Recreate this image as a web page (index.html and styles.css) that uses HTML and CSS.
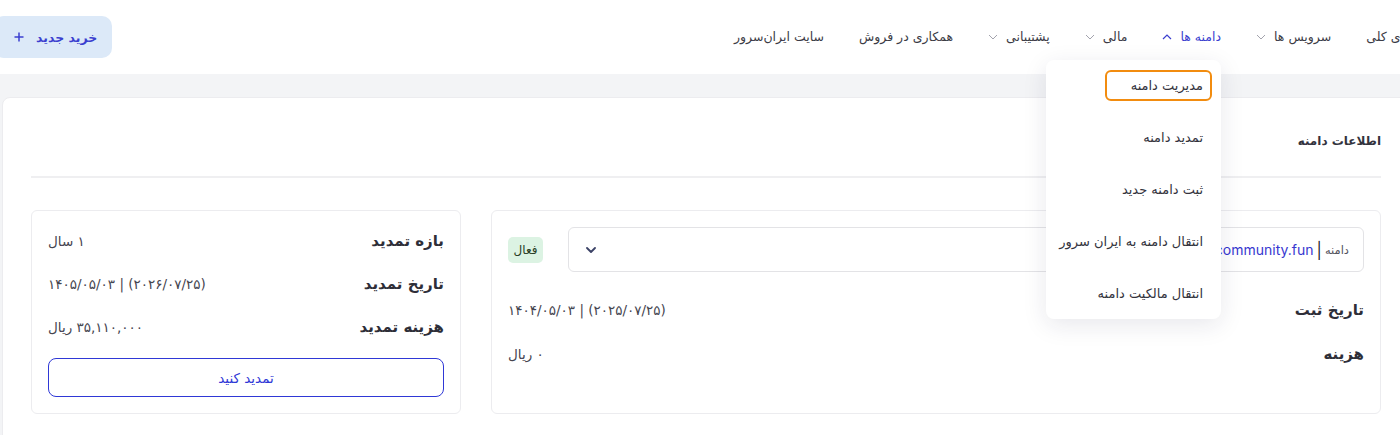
FILE: index.html
```html
<!DOCTYPE html>
<html lang="fa">
<head>
<meta charset="utf-8">
<title>اطلاعات دامنه</title>
<link rel="stylesheet" href="styles.css">
</head>
<body>
<div class="app" dir="rtl">
  <header class="topbar">
    <nav class="nav">
      <a class="nav-item">نمای کلی</a>
      <a class="nav-item"><span>سرویس ها</span><svg class="chev" viewBox="0 0 10 6"><path d="M1 1l4 4 4-4" fill="none" stroke="#a3a3ad" stroke-width="1"/></svg></a>
      <div class="nav-item active"><span>دامنه ها</span><svg class="chev" viewBox="0 0 10 6"><path d="M1 5l4-4 4 4" fill="none" stroke="#3b3fcf" stroke-width="1.2"/></svg>
        <div class="dropdown">
          <a class="dd-item focus">مدیریت دامنه</a>
          <a class="dd-item">تمدید دامنه</a>
          <a class="dd-item">ثبت دامنه جدید</a>
          <a class="dd-item">انتقال دامنه به ایران سرور</a>
          <a class="dd-item">انتقال مالکیت دامنه</a>
        </div>
      </div>
      <a class="nav-item"><span>مالی</span><svg class="chev" viewBox="0 0 10 6"><path d="M1 1l4 4 4-4" fill="none" stroke="#a3a3ad" stroke-width="1"/></svg></a>
      <a class="nav-item"><span>پشتیبانی</span><svg class="chev" viewBox="0 0 10 6"><path d="M1 1l4 4 4-4" fill="none" stroke="#a3a3ad" stroke-width="1"/></svg></a>
      <a class="nav-item">همکاری در فروش</a>
      <a class="nav-item">سایت ایران‌سرور</a>
    </nav>
    <button class="buy-btn"><span>خرید جدید</span><svg class="plus" viewBox="0 0 10 10"><path d="M5 0.5v9M0.5 5h9" fill="none" stroke="#3b3fcf" stroke-width="1.5"/></svg></button>
  </header>

  <main class="content">
    <section class="card">
      <h2 class="card-title">اطلاعات دامنه</h2>
      <div class="divider"></div>
      <div class="grid">
        <div class="box domain-box">
          <div class="domain-top">
            <div class="select">
              <div class="domain-name"><span class="domain-label">دامنه</span><span class="sep">|</span><span class="domain-value" dir="ltr">iranserver-community.fun</span></div>
              <svg class="select-chev" viewBox="0 0 10 6"><path d="M1 1l4 4 4-4" fill="none" stroke="#3b4266" stroke-width="1.8" stroke-linecap="round" stroke-linejoin="round"/></svg>
            </div>
            <span class="badge">فعال</span>
          </div>
          <div class="info-row first">
            <span class="label">تاریخ ثبت</span>
            <span class="value" dir="ltr">۱۴۰۴/۰۵/۰۳ | (۲۰۲۵/۰۷/۲۵)</span>
          </div>
          <div class="info-row">
            <span class="label">هزینه</span>
            <span class="value">۰ ریال</span>
          </div>
        </div>
        <div class="box renew-box">
          <div class="info-row">
            <span class="label">بازه تمدید</span>
            <span class="value">۱ سال</span>
          </div>
          <div class="info-row">
            <span class="label">تاریخ تمدید</span>
            <span class="value" dir="ltr">۱۴۰۵/۰۵/۰۳ | (۲۰۲۶/۰۷/۲۵)</span>
          </div>
          <div class="info-row">
            <span class="label">هزینه تمدید</span>
            <span class="value">۳۵,۱۱۰,۰۰۰ ریال</span>
          </div>
          <button class="renew-btn">تمدید کنید</button>
        </div>
      </div>
    </section>
  </main>
</div>
</body>
</html>
```

FILE: styles.css
```css
* {
  box-sizing: border-box;
  margin: 0;
  padding: 0;
}

body {
  font-family: "DejaVu Sans", sans-serif;
  background: #f3f4f6;
  color: #3c3c46;
  overflow: hidden;
  height: 435px;
}

.app {
  width: 1424px;
  direction: rtl;
}

/* Top bar */
.topbar {
  height: 74px;
  background: #ffffff;
  display: flex;
  align-items: center;
  justify-content: space-between;
  padding-right: 9px;
}

.nav {
  display: flex;
  align-items: center;
  gap: 35px;
}

.nav-item {
  position: relative;
  display: flex;
  align-items: center;
  gap: 8px;
  font-size: 12.5px;
  line-height: 20px;
  color: #3c3c46;
  white-space: nowrap;
  text-decoration: none;
}

.nav-item.active {
  color: #3b3fcf;
}

.chev {
  width: 10px;
  height: 6px;
  display: block;
}

.buy-btn {
  margin-left: -6px;
  height: 42px;
  padding: 0 15px 0 20px;
  border: none;
  border-radius: 10px;
  background: #dce9f8;
  color: #3b3fcf;
  font-family: inherit;
  font-size: 12.5px;
  font-weight: bold;
  display: flex;
  align-items: center;
  gap: 12px;
  direction: rtl;
}

.plus {
  width: 10px;
  height: 10px;
  display: block;
}

/* Dropdown */
.dropdown {
  position: absolute;
  top: calc(100% + 13px);
  right: 0;
  width: 175px;
  background: #ffffff;
  border-radius: 8px;
  box-shadow: 0 6px 24px rgba(30, 30, 70, 0.10);
  padding: 10px 9px;
  display: flex;
  flex-direction: column;
  align-items: flex-start;
  gap: 21px;
  z-index: 10;
}

.dd-item {
  padding: 4px 7px 4px 24px;
  line-height: 19px;
  font-size: 13px;
  color: #33333d;
  border: 2px solid transparent;
  border-radius: 6px;
  white-space: nowrap;
}

.dd-item.focus {
  border-color: #f28c0f;
}

/* Content */
.content {
  padding-top: 23px;
}

.card {
  margin: 0 14px 0 2px;
  background: #ffffff;
  border: 1px solid #ececef;
  border-radius: 8px 8px 0 0;
  padding: 32px 28px 40px;
}

.card-title {
  font-size: 12px;
  font-weight: bold;
  line-height: 22px;
  color: #33333d;
}

.divider {
  height: 2px;
  background: #efeff1;
  margin-top: 24px;
}

.grid {
  display: grid;
  grid-template-columns: 1fr 430px;
  gap: 30px;
  margin-top: 32px;
}

.box {
  border: 1px solid #ececef;
  border-radius: 6px;
  padding: 16px;
}

.domain-top {
  display: flex;
  align-items: center;
  gap: 25px;
}

.select {
  flex: 1;
  height: 45px;
  border: 1px solid #e3e3e6;
  border-radius: 6px;
  display: flex;
  align-items: center;
  justify-content: space-between;
  padding: 0 14px 0 17px;
  overflow: hidden;
}

.domain-name {
  display: flex;
  align-items: center;
  gap: 3px;
}

.domain-label {
  font-size: 11.5px;
  color: #55555f;
}

.sep {
  font-family: "Inter", sans-serif;
  font-size: 16px;
  color: #222228;
}

.domain-value {
  font-family: "Inter", sans-serif;
  font-size: 14px;
  color: #3838d0;
}

.select-chev {
  width: 10px;
  height: 6px;
  display: block;
}

.badge {
  width: 35px;
  height: 26px;
  border-radius: 5px;
  background: #dcf3e3;
  color: #2a3f25;
  font-size: 12px;
  display: flex;
  align-items: center;
  justify-content: center;
}

.info-row {
  display: flex;
  align-items: center;
  justify-content: space-between;
  height: 28px;
}

.domain-box .info-row.first {
  margin-top: 24px;
}

.domain-box .info-row + .info-row {
  margin-top: 16px;
}

.label {
  font-size: 15px;
  font-weight: bold;
  color: #2e2e38;
}

.value {
  font-size: 13.5px;
  color: #45454f;
}

.renew-box {
  display: flex;
  flex-direction: column;
  gap: 15px;
}

.renew-btn {
  margin-top: 2px;
  height: 39px;
  border: 1px solid #2f38d6;
  border-radius: 8px;
  background: #ffffff;
  color: #2f38d6;
  font-family: inherit;
  font-size: 13.5px;
}
```
